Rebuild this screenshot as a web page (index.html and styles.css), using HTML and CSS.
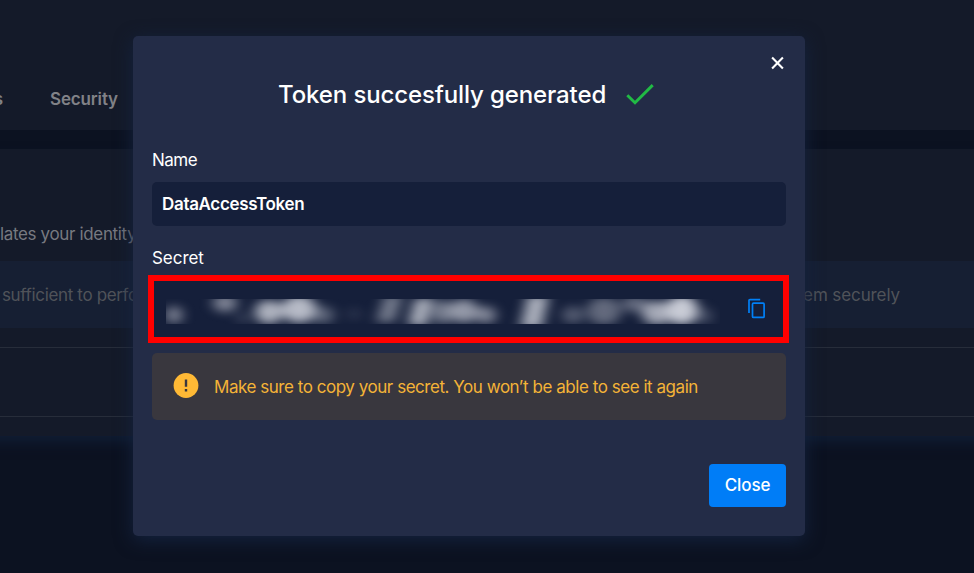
FILE: index.html
```html
<!DOCTYPE html>
<html lang="en">
<head>
<meta charset="utf-8">
<title>Token generated</title>
<link rel="stylesheet" href="styles.css">
</head>
<body>
<div class="page">
  <nav class="tabs"><span class="tab tab-cut">s</span><span class="tab">Security</span></nav>
  <main class="panel">
    <p class="intro">lates your identity</p>
    <div class="notice"><span class="notice-start">sufficient to perform</span><span class="notice-end">them securely</span></div>
    <div class="row"></div>
  </main>
</div>
<div class="overlay">
  <section class="modal" role="dialog">
    <button class="dismiss" aria-label="Dismiss"><svg width="14" height="14" viewBox="0 0 14 14"><path d="M2.1 1.6L12.9 12.4M12.9 1.6L2.1 12.4" stroke="#fff" stroke-width="2.1"/></svg></button>
    <h1 class="title"><span class="title-text">Token succesfully generated</span><svg width="28" height="22" viewBox="0 0 28 22"><path d="M1.3 11.2L9 18.8L26.7 1.1" fill="none" stroke="#21ba45" stroke-width="2.9"/></svg></h1>
    <div class="label label-name">Name</div>
    <div class="field"><span class="token">DataAccessToken</span></div>
    <div class="label label-secret">Secret</div>
    <div class="secret">
      <svg class="mask" width="554" height="25" viewBox="166 299 554 25">
        <defs><filter id="soft" filterUnits="userSpaceOnUse" x="140" y="270" width="610" height="90" color-interpolation-filters="sRGB"><feGaussianBlur stdDeviation="6.5 5"/></filter></defs>
        <g filter="url(#soft)" fill="#c9ccd6">
          <ellipse cx="174" cy="315" rx="8" ry="9" opacity=".6"/>
          <ellipse cx="225" cy="303" rx="12" ry="9" opacity=".6"/>
          <ellipse cx="243" cy="318" rx="6" ry="5" opacity=".25"/>
          <ellipse cx="269" cy="312" rx="14" ry="12" opacity=".85"/>
          <ellipse cx="299" cy="309" rx="17" ry="14" opacity=".9"/>
          <ellipse cx="323" cy="315" rx="11" ry="9" opacity=".4"/>
          <ellipse cx="354" cy="314" rx="7" ry="6" opacity=".13"/>
          <path d="M376 322L385 295H403L394 322Z" opacity=".55"/>
          <path d="M408 325L415 299L433 297L426 327Z" opacity=".85"/>
          <ellipse cx="443" cy="312" rx="11" ry="12" opacity=".55"/>
          <ellipse cx="464" cy="311" rx="14" ry="12" opacity=".7"/>
          <ellipse cx="486" cy="315" rx="10" ry="9" opacity=".6"/>
          <path d="M520 329L528 295H549L541 329Z" opacity=".85"/>
          <ellipse cx="573" cy="315" rx="11" ry="9" opacity=".35"/>
          <ellipse cx="604" cy="311" rx="17" ry="14" opacity=".43"/>
          <ellipse cx="635" cy="304" rx="13" ry="8" opacity=".45"/>
          <ellipse cx="657" cy="313" rx="15" ry="12" opacity=".8"/>
          <ellipse cx="682" cy="310" rx="16" ry="15" opacity="1"/>
          <ellipse cx="704" cy="316" rx="9" ry="8" opacity=".25"/>
        </g>
      </svg>
      <svg class="copy" width="20" height="22" viewBox="0 0 20 22" fill="none" stroke="#0080f7" stroke-width="1.7"><path d="M2 15V2.6Q2 1.6 3 1.6H13.2"/><rect x="5.5" y="5.2" width="11.6" height="14.2" rx="1"/></svg>
    </div>
    <div class="warning">
      <svg width="26" height="26" viewBox="0 0 26 26"><circle cx="13" cy="12.5" r="12.4" fill="#ffb935"/><path d="M13 6.5V13.7M13 16.1V18.6" stroke="#39373e" stroke-width="2.4"/></svg>
      <span class="warning-text">Make sure to copy your secret. You won’t be able to see it again</span>
    </div>
    <button class="close"><span class="close-text">Close</span></button>
  </section>
</div>
</body>
</html>
```
FILE: styles.css
```css
* { box-sizing: border-box; }
body {
  margin: 0;
  width: 974px;
  height: 573px;
  overflow: hidden;
  background: #0c1221;
  color: #fff;
  font: 17px/24px Inter, "Open Sans", sans-serif;
}
button { border: 0; padding: 0; color: inherit; font: inherit; }
svg { display: block; flex: none; }
span { white-space: nowrap; }
.page { height: 573px; overflow: hidden; }
.tabs {
  height: 130px;
  padding-top: 87px;
  display: flex;
  gap: 47px;
  background: #141a29;
  color: #818287;
  font-weight: 600;
  letter-spacing: -0.15px;
}
.tab-cut { width: 3px; direction: rtl; letter-spacing: 0; }
.panel {
  height: 287px;
  margin: 19px -30px 0;
  padding-top: 73px;
  background: #141a29;
  box-shadow: 0 8px 12px -2px #101d34;
}
.intro { margin: 0 30px; color: #777980; letter-spacing: -0.35px; }
.notice {
  height: 67px;
  margin-top: 15px;
  padding: 0 104px 0 32px;
  display: flex;
  align-items: center;
  justify-content: space-between;
  background: #161f33;
  color: #505359;
  letter-spacing: -0.35px;
}
.notice-end { letter-spacing: -0.1px; }
.row { height: 70px; margin-top: 19px; border: solid #272d3a; border-width: 1px 0; }
.overlay { position: absolute; inset: 0; padding: 36px 0 0 133px; }
.modal {
  width: 672px;
  height: 500px;
  padding: 20px 19px 29px;
  display: flex;
  flex-direction: column;
  border-radius: 5px;
  background: #232c47;
  box-shadow: 0 4px 18px #14233f;
}
.dismiss { align-self: flex-end; margin-right: 2px; background: none; }
.title {
  height: 36px;
  margin: 7px 0 0 126px;
  display: flex;
  align-items: center;
  gap: 20px;
  font-size: 24px;
  font-weight: 500;
}
.title-text { width: 328px; letter-spacing: -0.12px; }
.label { letter-spacing: -0.3px; }
.label-name { margin-top: 35px; letter-spacing: -0.5px; }
.label-secret { margin-top: 20px; letter-spacing: -0.05px; }
.field {
  height: 44px;
  margin-top: 10px;
  padding-left: 10px;
  display: flex;
  align-items: center;
  border-radius: 5px;
  background: #151f3a;
  font-weight: 600;
  letter-spacing: -0.33px;
}
.secret {
  height: 68px;
  margin: 5px -3px 0 -4px;
  padding: 0 16px 0 12px;
  display: flex;
  align-items: center;
  justify-content: space-between;
  border: 6px solid #f00;
  background: #151f3a;
}
.mask { margin-top: 4px; }
.warning {
  height: 67px;
  margin-top: 10px;
  padding: 0 21px;
  display: flex;
  align-items: center;
  gap: 15px;
  border-radius: 5px;
  background: #39373e;
  color: #f4b337;
}
.warning svg { margin-top: -2px; }
.warning-text { letter-spacing: -0.46px; }
.close {
  width: 77px;
  height: 43px;
  margin-top: auto;
  padding-bottom: 2px;
  align-self: flex-end;
  border-radius: 4px;
  background: #007df7;
  font-weight: 500;
  letter-spacing: -0.1px;
}
```
